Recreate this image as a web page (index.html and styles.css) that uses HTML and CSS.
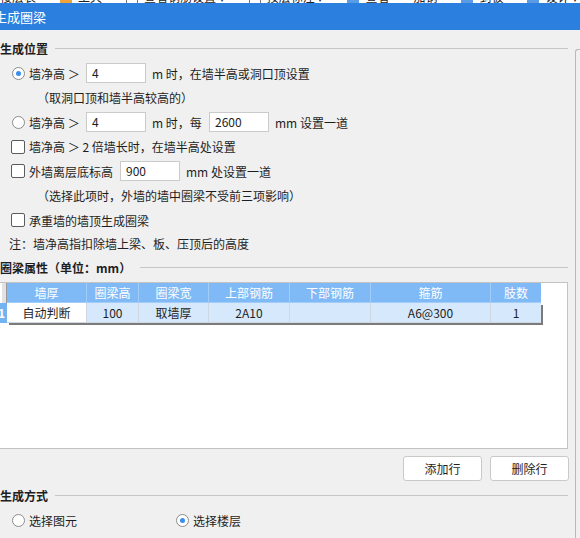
FILE: index.html
```html
<!DOCTYPE html>
<html lang="zh-CN">
<head>
  <meta charset="UTF-8">
  <title>生成圈梁</title>
  <link rel="stylesheet" href="styles.css">
</head>
<body>
<div class="toolstrip">
  <div class="tools">
    <span class="tool">楼层表</span>
    <span class="ticon orange"></span><span class="tool">工具</span>
    <span class="ticon box"></span><span class="tool">查看钢筋设置 ▾</span>
    <span class="ticon box"></span><span class="tool">按层标注 ▾</span>
    <span class="ticon blue"></span><span class="tool">查看</span>
    <span class="tool">加钢</span>
    <span class="ticon blue"></span><span class="tool">到板</span>
    <span class="ticon blue"></span><span class="tool">设计 ▾</span>
  </div>
</div>

<div class="titlebar">生成圈梁</div>

<div class="dialog">
  <div class="main">
    <div class="group-title first">生成位置</div>

    <div class="row">
      <span class="radio on"></span>
      <span class="lbl w57">墙净高 ＞</span>
      <span class="field">4</span>
      <span class="lbl after">m 时，在墙半高或洞口顶设置</span>
    </div>
    <div class="row note">（取洞口顶和墙半高较高的）</div>
    <div class="row">
      <span class="radio"></span>
      <span class="lbl w57">墙净高 ＞</span>
      <span class="field">4</span>
      <span class="lbl after w57">m 时，每</span>
      <span class="field">2600</span>
      <span class="lbl after">mm 设置一道</span>
    </div>
    <div class="row">
      <span class="check"></span>
      <span class="lbl">墙净高 ＞ 2 倍墙长时，在墙半高处设置</span>
    </div>
    <div class="row">
      <span class="check"></span>
      <span class="lbl w91">外墙离层底标高</span>
      <span class="field">900</span>
      <span class="lbl after">mm 处设置一道</span>
    </div>
    <div class="row note">（选择此项时，外墙的墙中圈梁不受前三项影响）</div>
    <div class="row">
      <span class="check"></span>
      <span class="lbl">承重墙的墙顶生成圈梁</span>
    </div>
    <div class="row tip">注：墙净高指扣除墙上梁、板、压顶后的高度</div>

    <div class="group-title second">圈梁属性（单位：mm）</div>

    <div class="grid-box">
      <div class="grid-row">
        <div class="row-head"></div>
        <div class="cells head">
          <div class="cell c1">墙厚</div>
          <div class="cell c2">圈梁高</div>
          <div class="cell c3">圈梁宽</div>
          <div class="cell c4">上部钢筋</div>
          <div class="cell c5">下部钢筋</div>
          <div class="cell c6">箍筋</div>
          <div class="cell c7">肢数</div>
        </div>
      </div>
      <div class="grid-row">
        <div class="row-head num">1</div>
        <div class="cells data">
          <div class="cell c1 current">自动判断</div>
          <div class="cell c2">100</div>
          <div class="cell c3">取墙厚</div>
          <div class="cell c4">2A10</div>
          <div class="cell c5"></div>
          <div class="cell c6">A6@300</div>
          <div class="cell c7">1</div>
        </div>
      </div>
    </div>

    <div class="button-row">
      <button class="btn">添加行</button>
      <button class="btn">删除行</button>
    </div>

    <div class="group-title third">生成方式</div>

    <div class="row mode">
      <span class="opt">
        <span class="radio"></span>
        <span class="lbl">选择图元</span>
      </span>
      <span class="opt">
        <span class="radio on"></span>
        <span class="lbl">选择楼层</span>
      </span>
    </div>
  </div>
  <div class="side"></div>
</div>
</body>
</html>
```

FILE: styles.css
```css
* {
  box-sizing: border-box;
}

body {
  margin: 0;
  width: 580px;
  height: 538px;
  overflow: hidden;
  background-color: #f0f0f0;
  font-family: "Noto Sans CJK SC", "Noto Sans", sans-serif;
  font-size: 12px;
  color: #1e1e1e;
}

/* strip of the toolbar above the dialog */
.toolstrip {
  height: 3px;
  overflow: hidden;
  background-color: #fff;
}

.tools {
  display: flex;
  align-items: center;
  gap: 6px;
  height: 14px;
  margin-top: -10px;
  line-height: 14px;
  white-space: nowrap;
  color: #222;
}

.tool {
  margin-right: 18px;
}

.ticon {
  width: 12px;
  height: 14px;
  flex: none;
}

.ticon.orange { background-color: #f2a23a; }
.ticon.blue { background-color: #5a9be6; }
.ticon.box { border: 1px solid #777; background: #fff; }

.titlebar {
  height: 27px;
  line-height: 27px;
  background-color: #2b7fdf;
  color: #fff;
  font-size: 13px;
  text-indent: -6px;
  white-space: nowrap;
}

.dialog {
  display: flex;
}

.main {
  width: 575px;
  padding-right: 7px;
}

.side {
  flex: 1;
  margin-top: 19px;
  height: 500px;
  border-left: 1px solid #b9b9b9;
  border-top: 1px solid #b9b9b9;
  border-top-left-radius: 3px;
}

.group-title {
  display: flex;
  align-items: center;
  height: 16px;
  font-weight: bold;
  white-space: nowrap;
}

.group-title::after {
  content: "";
  flex: 1;
  margin-left: 7px;
  border-top: 1px solid #c6c6c6;
}

.group-title.first { margin-top: 10px; margin-bottom: 5px; }
.group-title.second { margin-top: 5px; margin-bottom: 6px; }
.group-title.third { margin-top: 7px; margin-bottom: 5px; }
.group-title.second::after { margin-left: 9px; }

.row {
  display: flex;
  align-items: center;
  height: 24.5px;
  padding-left: 11px;
  white-space: nowrap;
}

.row.note { padding-left: 37px; }
.row.tip { padding-left: 9px; height: 22px; }

.radio {
  display: flex;
  align-items: center;
  justify-content: center;
  width: 13px;
  height: 13px;
  margin-left: 1px;
  border: 1px solid #8c8c8c;
  border-radius: 50%;
  background-color: #fff;
  flex: none;
}

.radio.on::after {
  content: "";
  width: 5px;
  height: 5px;
  border-radius: 50%;
  background-color: #3a8ef0;
}

.check {
  width: 14px;
  height: 14px;
  border: 1px solid #5c5c5c;
  border-radius: 2px;
  background-color: #fff;
  flex: none;
}

.lbl {
  margin-left: 4px;
}

.lbl.w57 { width: 57px; }
.lbl.w91 { width: 91px; }
.lbl.after { margin-left: 6px; }

.field {
  width: 60px;
  height: 20px;
  line-height: 18px;
  padding-left: 5px;
  border: 1px solid #cbcbcb;
  background-color: #fff;
  flex: none;
}

/* 圈梁属性表 */
.grid-box {
  height: 167px;
  margin-left: -1px;
  border: 1px solid #c3c3c3;
  background-color: #fff;
}

.grid-row {
  display: flex;
  height: 20px;
}

.row-head {
  width: 7px;
  flex: none;
  background-color: #e2e2e2;
  border-right: 1px solid #9a9a9a;
  border-left: 2px solid #fff;
}

.row-head.num {
  background-color: #74b3f1;
  border: none;
  color: #fff;
  font-weight: bold;
  line-height: 20px;
  text-indent: -2px;
  overflow: hidden;
}

.cells {
  display: flex;
}

.cells.data {
  box-shadow: 2px 2px 0 #7b7b7b;
}

.cell {
  height: 20px;
  line-height: 19px;
  text-align: center;
  border-right: 1px solid #cfd8e2;
  flex: none;
}

.head .cell {
  background-color: #7fbaf6;
  color: #fff;
  border-right-color: #a2cdf8;
  border-bottom: 1px solid #a2cdf8;
}

.data .cell {
  background-color: #d6e9fc;
  border-bottom: 1px solid #cfd8e2;
}

.data .cell.current {
  background-color: #fff;
}

.c1 { width: 80px; }
.c2 { width: 52px; }
.c3 { width: 70px; }
.c4 { width: 81px; }
.c5 { width: 81px; }
.c6 { width: 120px; }
.c7 { width: 50px; border-right: none; }

.button-row {
  display: flex;
  justify-content: flex-end;
  gap: 8px;
  margin-top: 7px;
  margin-right: -1px;
}

.btn {
  width: 79px;
  height: 25px;
  padding: 0;
  border: 1px solid #c9c9c9;
  border-radius: 3px;
  background-color: #fff;
  font-family: inherit;
  font-size: 12px;
  color: #1e1e1e;
}

.row.mode {
  height: 24px;
}

.opt {
  display: flex;
  align-items: center;
}

.opt:first-child {
  width: 164px;
}
```
